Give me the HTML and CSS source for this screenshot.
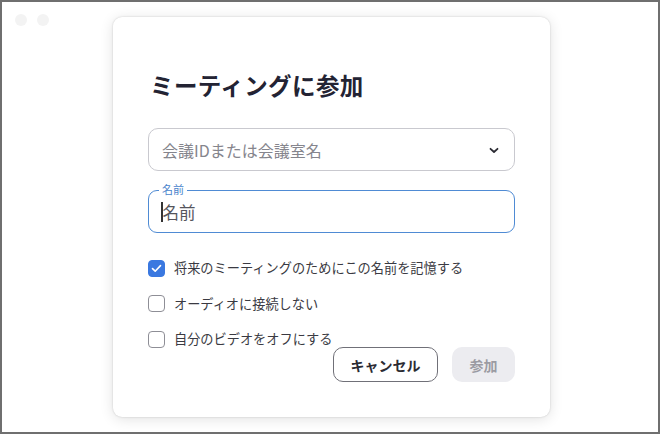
FILE: index.html
```html
<!DOCTYPE html>
<html lang="ja">
<head>
<meta charset="utf-8">
<link rel="stylesheet" href="styles.css">
</head>
<body>
<div class="window">
  <div class="lights"><span class="light"></span><span class="light"></span></div>
  <div class="dialog">
    <h1 class="title">ミーティングに参加</h1>
    <div class="select">
      <span class="placeholder">会議IDまたは会議室名</span>
      <svg class="chevron" width="10" height="7" viewBox="0 0 10 7"><path d="M1.5 1.8 L5 5 L8.5 1.8" fill="none" stroke="#2b2b33" stroke-width="1.8" stroke-linecap="round" stroke-linejoin="round"/></svg>
    </div>
    <div class="field">
      <span class="field-label">名前</span>
      <span class="caret"></span><span class="field-value">名前</span>
    </div>
    <div class="options">
      <label class="option"><span class="box checked"><svg width="11" height="9" viewBox="0 0 11 9"><path d="M1.5 4.6 L4.2 7.2 L9.5 1.6" fill="none" stroke="#fff" stroke-width="1.6" stroke-linecap="round" stroke-linejoin="round"/></svg></span><span>将来のミーティングのためにこの名前を記憶する</span></label>
      <label class="option"><span class="box"></span><span>オーディオに接続しない</span></label>
      <label class="option"><span class="box"></span><span>自分のビデオをオフにする</span></label>
    </div>
    <div class="actions">
      <button class="btn cancel">キャンセル</button>
      <button class="btn join">参加</button>
    </div>
  </div>
</div>
</body>
</html>
```
FILE: styles.css
```css
html, body {
  margin: 0;
  padding: 0;
  background: #fff;
}
body {
  font-family: "Noto Sans CJK JP", "Noto Sans", sans-serif;
  color: #232333;
}
.window {
  position: relative;
  box-sizing: border-box;
  width: 660px;
  height: 434px;
  border: 2px solid #6f6f6f;
  background: #fff;
  padding: 15px 0 0 111px;
}
.lights {
  position: absolute;
  left: 13px;
  top: 12px;
  display: flex;
  gap: 10px;
}
.light {
  width: 12px;
  height: 12px;
  border-radius: 50%;
  background: #f3f3f3;
}
.dialog {
  box-sizing: border-box;
  width: 437px;
  height: 400px;
  background: #fff;
  border-radius: 9px;
  box-shadow: 0 0 2px rgba(0,0,0,0.18), 0 2px 14px rgba(0,0,0,0.12);
  padding: 50px 35px 0 35px;
}
.title {
  margin: 0 0 25px 2px;
  font-size: 23.5px;
  line-height: 36px;
  font-weight: 700;
  color: #232333;
  letter-spacing: 0.4px;
}
.select {
  box-sizing: border-box;
  height: 43px;
  border: 1px solid #c9c9cf;
  border-radius: 10px;
  display: flex;
  align-items: center;
  justify-content: space-between;
  padding: 0 15px 0 13px;
}
.placeholder {
  font-size: 16px;
  color: #85858d;
}
.chevron {
  margin-top: 2px;
}
.field {
  position: relative;
  box-sizing: border-box;
  height: 43px;
  margin-top: 19px;
  border: 1.5px solid #4f8bd4;
  border-radius: 9px;
  display: flex;
  align-items: center;
  padding: 0 12px 0 12px;
}
.field-label {
  position: absolute;
  left: 10px;
  top: -9px;
  background: #fff;
  padding: 0 3px;
  font-size: 11px;
  line-height: 14px;
  color: #4a84cc;
}
.caret {
  width: 1.5px;
  height: 20px;
  background: #333;
}
.field-value {
  font-size: 16.5px;
  color: #55555c;
}
.options {
  margin-top: 26px;
  display: flex;
  flex-direction: column;
  gap: 17.5px;
}
.option {
  display: flex;
  align-items: center;
  gap: 9px;
  font-size: 13.2px;
  line-height: 18px;
  color: #3a3a42;
}
.box {
  box-sizing: border-box;
  width: 17px;
  height: 17px;
  border: 1.5px solid #8e8e96;
  border-radius: 4px;
  display: flex;
  align-items: center;
  justify-content: center;
}
.box.checked {
  background: #3a78e0;
  border-color: #3a78e0;
}
.actions {
  display: flex;
  justify-content: flex-end;
  gap: 14px;
  margin-top: -1px;
}
.btn {
  box-sizing: border-box;
  height: 35px;
  padding: 0;
  border-radius: 10px;
  font-family: "Noto Sans CJK JP", "Noto Sans", sans-serif;
  font-size: 14px;
  font-weight: 700;
}
.cancel {
  width: 105px;
  background: #fff;
  border: 1px solid #707078;
  color: #2b2b33;
}
.join {
  width: 63px;
  background: #ececf0;
  border: none;
  color: #9b9ba3;
}
```
